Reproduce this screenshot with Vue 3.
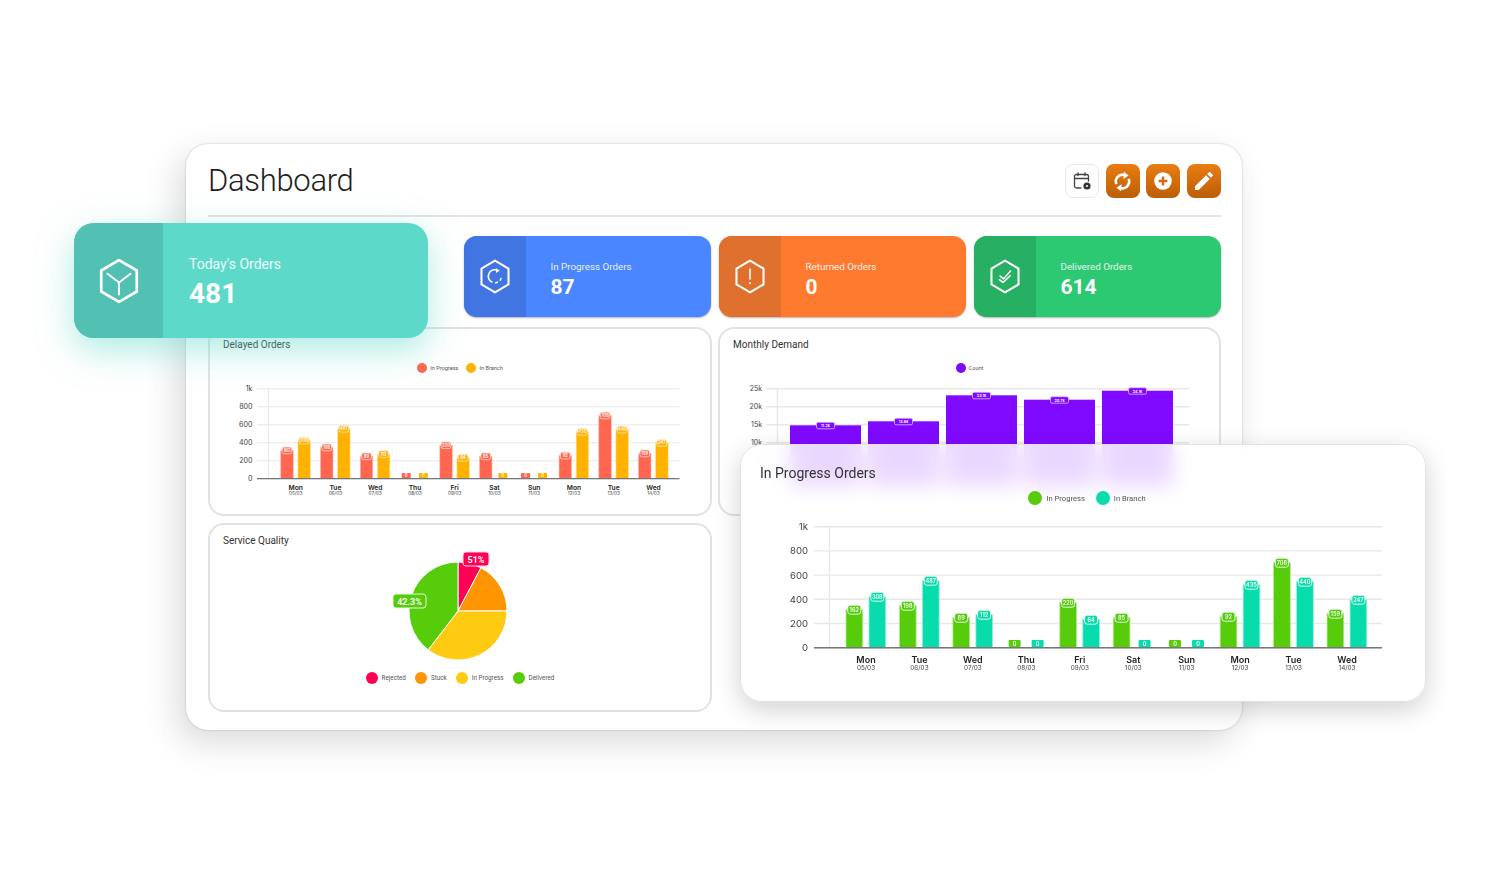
<script setup>
const hex = 'M20 2 L37 12 V32 L20 42 L3 32 V12 Z'

const days = [
  ['Mon', '05/03'], ['Tue', '06/03'], ['Wed', '07/03'], ['Thu', '08/03'], ['Fri', '09/03'],
  ['Sat', '10/03'], ['Sun', '11/03'], ['Mon', '12/03'], ['Tue', '13/03'], ['Wed', '14/03']
]
const pairs = [
  [162, 38, 308, 51], [198, 42, 487, 67], [89, 30, 112, 33], [0, 0, 0, 0], [220, 45, 64, 28],
  [85, 30, 0, 0], [0, 0, 0, 0], [92, 31, 435, 63], [708, 85, 440, 66], [159, 34, 247, 48]
]
const groups = days.map((d, i) => {
  const c = 866 + i * 53.45
  const [va, ha, vb, hb] = pairs[i]
  return {
    c, day: d[0], date: d[1],
    bars: [
      { key: 'a', x: c - 20, tag: c - 11.7, v: va, h: ha },
      { key: 'b', x: c + 3, tag: c + 11.3, v: vb, h: hb }
    ]
  }
})
const gridY = [
  ['1k', 526.7], ['800', 550.9], ['600', 575.1], ['400', 599.3], ['200', 623.5], ['0', 647.7]
]
const demandGrid = [['25k', 388.7], ['20k', 406.7], ['15k', 424.7], ['10k', 442.7], ['5k', 460.7], ['0', 478.7]]
const demand = [
  { x: 790, top: 425.3, v: '11.2k' },
  { x: 868, top: 421.3, v: '13.6k' },
  { x: 946, top: 395.3, v: '23.1k' },
  { x: 1024, top: 399.7, v: '20.7k' },
  { x: 1102, top: 390.7, v: '24.1k' }
]

function arc(a0, a1, r = 49) {
  const p = (a) => {
    const t = (a * Math.PI) / 180
    return `${(70 + r * Math.sin(t)).toFixed(2)} ${(62 - r * Math.cos(t)).toFixed(2)}`
  }
  return `M70 62 L${p(a0)} A${r} ${r} 0 ${a1 - a0 > 180 ? 1 : 0} 1 ${p(a1)} Z`
}
const slices = [
  { d: arc(0, 28), fill: '#ff0055' },
  { d: arc(28, 90), fill: '#ff9500' },
  { d: arc(90, 217.5), fill: '#ffcb12' },
  { d: arc(217.5, 360), fill: '#57cc0b' }
]
const pieLegend = [
  { label: 'Rejected', color: '#ff0055' },
  { label: 'Stuck', color: '#ff9500' },
  { label: 'In Progress', color: '#ffcb12' },
  { label: 'Delivered', color: '#57cc0b' }
]
const stats = [
  { label: 'In Progress Orders', value: '87', cls: 'blue', icon: 'progress' },
  { label: 'Returned Orders', value: '0', cls: 'orange', icon: 'alert' },
  { label: 'Delivered Orders', value: '614', cls: 'green', icon: 'check' }
]
</script>

<template>
  <div class="page">
    <main class="panel">
      <header class="head">
        <h1>Dashboard</h1>
        <div class="actions">
          <button class="btn plain" aria-label="Calendar">
            <svg width="20" height="20" viewBox="0 0 20 20" fill="none" stroke="#444" stroke-width="1.3" stroke-linecap="round">
              <path d="M9 17H4.5A2 2 0 0 1 2.5 15V5.5A2 2 0 0 1 4.5 3.5H14.5A2 2 0 0 1 16.5 5.5V10" />
              <path d="M2.5 7.5H16.5M6 1.8V4.5M13 1.8V4.5" />
              <circle cx="15" cy="15" r="3.6" fill="#333" stroke="none" />
              <circle cx="15" cy="15" r="1" fill="#fff" stroke="none" />
            </svg>
          </button>
          <button class="btn" aria-label="Refresh">
            <svg width="21" height="21" viewBox="0 0 24 24" fill="none" stroke="#fff" stroke-width="3">
              <path d="M5 15A7.8 7.8 0 0 1 14.5 4.6" />
              <path d="M19 9A7.8 7.8 0 0 1 9.5 19.4" />
              <path d="M13.5 0.8L19 5L13 9Z" fill="#fff" stroke="none" />
              <path d="M10.5 23.2L5 19L11 15Z" fill="#fff" stroke="none" />
            </svg>
          </button>
          <button class="btn" aria-label="Add">
            <svg width="20" height="20" viewBox="0 0 20 20">
              <circle cx="10" cy="10" r="8.8" fill="#fff" />
              <path d="M10 5.6V14.4M5.6 10H14.4" stroke="#d06c0a" stroke-width="2.4" />
            </svg>
          </button>
          <button class="btn" aria-label="Edit">
            <svg width="24" height="24" viewBox="0 0 24 24" fill="#fff">
              <path d="M3 17.25V21h3.75L17.81 9.94l-3.75-3.75L3 17.25zM20.71 7.04a1 1 0 0 0 0-1.41l-2.34-2.34a1 1 0 0 0-1.41 0l-1.83 1.83 3.75 3.75 1.83-1.83z" />
            </svg>
          </button>
        </div>
      </header>

      <section class="stats">
        <article v-for="s in stats" :key="s.label" class="stat" :class="s.cls">
          <div class="stat-icon">
            <svg width="32" height="35" viewBox="0 0 40 44" fill="none" stroke="#fff" stroke-width="2.6" stroke-linejoin="round" stroke-linecap="round">
              <path :d="hex" />
              <template v-if="s.icon === 'progress'">
                <path d="M23.5 14.5A8 8 0 0 0 16 29" stroke-width="2" />
                <path d="M21 30A8 8 0 0 0 23 29" stroke-width="2" />
                <path d="M26.5 26.5L27.5 24.5" stroke-width="2" />
                <path d="M21 11.5L26 14.5L21.5 17.5Z" fill="#fff" stroke="none" />
              </template>
              <template v-else-if="s.icon === 'alert'">
                <path d="M20 12.5V25" stroke-width="2" />
                <path d="M20 30V30.6" stroke-width="2.4" />
              </template>
              <template v-else>
                <path d="M14 21.5L18 25L27 15" stroke-width="1.9" />
                <path d="M13 26L17.5 29.5L26.5 21" stroke-width="1.9" />
              </template>
            </svg>
          </div>
          <div class="stat-body">
            <span class="stat-label">{{ s.label }}</span>
            <strong class="stat-value">{{ s.value }}</strong>
          </div>
        </article>
      </section>

      <section class="cards">
        <article class="card">
          <h2>Delayed Orders</h2>
          <div class="legend">
            <span class="item"><i style="background:#ff6650"></i>In Progress</span>
            <span class="item"><i style="background:#ffb300"></i>In Branch</span>
          </div>
          <svg class="mini" viewBox="790 515 610 160" width="454" height="119">
            <g v-for="g in gridY" :key="g[0]">
              <line x1="814" x2="1382" :y1="g[1]" :y2="g[1]" class="grid" />
              <text x="808" :y="g[1] + 3.5" text-anchor="end" class="ylab">{{ g[0] }}</text>
            </g>
            <line x1="829.5" x2="829.5" y1="526.7" y2="647.7" class="grid" />
            <g v-for="g in groups" :key="g.c">
              <template v-for="b in g.bars" :key="b.key">
                <template v-if="b.h">
                  <rect :x="b.x" :y="647.7 - b.h" width="16.7" :height="b.h" :fill="b.key === 'a' ? '#ff6650' : '#ffb300'" :stroke="b.key === 'a' ? '#ffb3a8' : '#ffe09a'" stroke-width="0.8" />
                  <rect :x="b.tag - 6.5" :y="643.2 - b.h" width="13" height="9" rx="2.5" :fill="b.key === 'a' ? '#ff6650' : '#ffb300'" stroke="#ffe8d8" stroke-width="1" />
                  <text :x="b.tag" :y="649.6 - b.h" class="tag">{{ b.v }}</text>
                </template>
                <template v-else>
                  <rect :x="b.tag - 6" y="640" width="12" height="7" rx="1" :fill="b.key === 'a' ? '#ff6650' : '#ffb300'" />
                  <text :x="b.tag" y="645.6" class="tag">0</text>
                </template>
              </template>
              <text :x="g.c" y="662.5" class="day">{{ g.day }}</text>
              <text :x="g.c" y="669.5" class="date">{{ g.date }}</text>
            </g>
            <line x1="814" x2="1382" y1="647.7" y2="647.7" class="base" />
          </svg>
        </article>

        <article class="card">
          <h2>Monthly Demand</h2>
          <div class="legend">
            <span class="item"><i style="background:#7f0aff"></i>Count</span>
          </div>
          <svg class="demand" viewBox="730 380 470 120" width="470" height="120">
            <g v-for="g in demandGrid" :key="g[0]">
              <line x1="766" x2="1189" :y1="g[1]" :y2="g[1]" class="grid" />
              <text x="762" :y="g[1] + 2.5" text-anchor="end" class="ylab small">{{ g[0] }}</text>
            </g>
            <line x1="777.5" x2="777.5" y1="388.7" y2="478.7" class="grid" />
            <g v-for="d in demand" :key="d.x">
              <rect :x="d.x" :y="d.top" width="71" :height="486 - d.top" fill="#7f0aff" />
              <rect :x="d.x + 26.5" :y="d.top - 3" width="18" height="6.5" rx="1.5" fill="#7f0aff" stroke="#d9bcff" stroke-width="0.8" />
              <text :x="d.x + 35.5" :y="d.top + 1.9" class="tag tiny">{{ d.v }}</text>
            </g>
          </svg>
        </article>

        <article class="card">
          <h2>Service Quality</h2>
          <svg class="pie" viewBox="0 0 140 122" width="140" height="122">
            <path v-for="s in slices" :key="s.fill" :d="s.d" :fill="s.fill" stroke="#fff" stroke-width="1" />
            <rect x="75" y="3" width="26" height="14" rx="3" fill="#ff0055" stroke="#ffd6e3" stroke-width="1" />
            <text x="88" y="13.5" class="pct">51%</text>
            <rect x="5" y="45" width="33" height="14" rx="3" fill="#57cc0b" stroke="#e3f7d4" stroke-width="1" />
            <text x="21.5" y="55.5" class="pct">42.3%</text>
          </svg>
          <div class="legend pie-legend">
            <span v-for="l in pieLegend" :key="l.label" class="item"><i :style="{ background: l.color }"></i>{{ l.label }}</span>
          </div>
        </article>
      </section>

      <article class="float-today">
        <div class="today-icon">
          <svg width="42" height="46" viewBox="0 0 40 44" fill="none" stroke="#fff" stroke-width="2.6" stroke-linejoin="round" stroke-linecap="round">
            <path :d="hex" />
            <path d="M9 15L20 23.5L31 15M20 23.5V35" stroke-width="1.9" />
          </svg>
        </div>
        <div class="today-body">
          <span class="today-label">Today's Orders</span>
          <strong class="today-value">481</strong>
        </div>
      </article>

      <article class="float-chart">
        <h2>In Progress Orders</h2>
        <div class="legend big">
          <span class="item"><i style="background:#57cc0b"></i>In Progress</span>
          <span class="item"><i style="background:#08dcac"></i>In Branch</span>
        </div>
        <svg class="large" viewBox="790 515 610 160" width="610" height="160">
          <g v-for="g in gridY" :key="g[0]">
            <line x1="814" x2="1382" :y1="g[1]" :y2="g[1]" class="grid" />
            <text x="808" :y="g[1] + 3.5" text-anchor="end" class="ylab">{{ g[0] }}</text>
          </g>
          <line x1="829.5" x2="829.5" y1="526.7" y2="647.7" class="grid" />
          <g v-for="g in groups" :key="g.c">
            <template v-for="b in g.bars" :key="b.key">
              <template v-if="b.h">
                <rect :x="b.x" :y="647.7 - b.h" width="16.7" :height="b.h" :fill="b.key === 'a' ? '#57cc0b' : '#08dcac'" :stroke="b.key === 'a' ? '#b4eb8e' : '#95f0da'" stroke-width="0.8" />
                <rect :x="b.tag - 6.5" :y="643.2 - b.h" width="13" height="9" rx="2.5" :fill="b.key === 'a' ? '#57cc0b' : '#08dcac'" stroke="#e2f9e8" stroke-width="1" />
                <text :x="b.tag" :y="649.6 - b.h" class="tag">{{ b.v }}</text>
              </template>
              <template v-else>
                <rect :x="b.tag - 6" y="640" width="12" height="7" rx="1" :fill="b.key === 'a' ? '#57cc0b' : '#08dcac'" />
                <text :x="b.tag" y="645.6" class="tag">0</text>
              </template>
            </template>
            <text :x="g.c" y="662.5" class="day">{{ g.day }}</text>
            <text :x="g.c" y="669.5" class="date">{{ g.date }}</text>
          </g>
          <line x1="814" x2="1382" y1="647.7" y2="647.7" class="base" />
        </svg>
      </article>
    </main>
  </div>
</template>

<style>
html, body { background: #fff; overflow: hidden; }
</style>

<style scoped>
.page {
  width: 1500px;
  height: 874px;
  box-sizing: border-box;
  padding: 144px 0 0 186px;
  background: #fff;
  overflow: hidden;
  font-family: Roboto, "Noto Sans", sans-serif;
}
.panel {
  position: relative;
  width: 1056px;
  height: 586px;
  box-sizing: border-box;
  padding: 0 21px 0 22px;
  background: #fff;
  border-radius: 22px;
  box-shadow: 0 0 2px rgba(0, 0, 0, .25), -8px 12px 34px rgba(0, 0, 0, .15);
}
.head {
  height: 73px;
  box-sizing: border-box;
  display: flex;
  align-items: flex-start;
  justify-content: space-between;
  border-bottom: 2px solid #e4e4e4;
}
h1 {
  margin: 16.5px 0 0;
  font: 300 31px/40px Roboto, sans-serif;
  letter-spacing: -.3px;
  color: #1e1e1e;
}
.actions { display: flex; gap: 6.67px; margin-top: 20px; }
.btn {
  width: 34px;
  height: 34px;
  padding: 0;
  display: flex;
  align-items: center;
  justify-content: center;
  border: 0;
  border-radius: 8px;
  background: linear-gradient(#e97d13, #bb5e05);
}
.btn.plain {
  background: #fff;
  border: 1.5px solid #e9e9e9;
  box-sizing: border-box;
}
.stats {
  display: flex;
  justify-content: flex-end;
  gap: 8px;
  margin-top: 19px;
}
.stat {
  width: 247px;
  height: 81px;
  display: flex;
  border-radius: 13px;
  overflow: hidden;
  color: #fff;
  box-shadow: 0 1px 2px rgba(0, 0, 0, .3);
}
.stat-icon {
  width: 62px;
  display: flex;
  align-items: center;
  justify-content: center;
}
.stat-body {
  padding: 23px 0 0 24.5px;
  display: flex;
  flex-direction: column;
}
.stat-label { font-size: 9.8px; line-height: 15px; opacity: .88; }
.stat-value { font-size: 21px; line-height: 26px; font-weight: 700; }
.blue { background: #4a86ff; }
.blue .stat-icon { background: #4175e2; }
.orange { background: #fd7a2f; }
.orange .stat-icon { background: #e0702d; }
.green { background: #2cc872; }
.green .stat-icon { background: #27b063; }

.cards {
  display: grid;
  grid-template-columns: 504px 503px;
  grid-template-rows: 189px 189px;
  gap: 7px 6px;
  margin-top: 10px;
}
.card {
  box-sizing: border-box;
  padding: 8px 0 0 13px;
  border: 2px solid #e2e2e2;
  border-radius: 16px;
  background: #fff;
}
h2 {
  margin: 0;
  font: 400 10px/16px Roboto, sans-serif;
  color: #333;
}
.legend {
  display: flex;
  justify-content: center;
  gap: 8px;
  height: 12px;
  margin: 9px 13px 0 0;
}
.item {
  display: flex;
  align-items: center;
  gap: 3px;
  font-size: 5.6px;
  color: #555;
}
.item i {
  width: 10px;
  height: 10px;
  border-radius: 50%;
}
.mini { display: block; margin: 6px 0 0 16px; }
.demand { display: block; margin: 6px 0 0 -3px; }
.pie { display: block; margin: 0 0 0 165px; }
.pie-legend { gap: 9px; margin-top: 1px; }
.pie-legend .item { gap: 4px; font-size: 6.3px; }
.pie-legend .item i { width: 12px; height: 12px; }

.grid { stroke: #e8e8e8; stroke-width: 1.4; }
.base { stroke: #777; stroke-width: 1.6; }
.ylab { font: 400 9.6px Inter, sans-serif; fill: #444; }
.ylab.small { font-size: 7px; }
.tag { font: 600 5.6px Inter, sans-serif; fill: #fff; text-anchor: middle; }
.tag.tiny { font-size: 3.8px; }
.day { font: 600 9px Inter, sans-serif; fill: #222; text-anchor: middle; }
.date { font: 400 6.4px Inter, sans-serif; fill: #444; text-anchor: middle; }
.pct { font: 600 9px Roboto, sans-serif; fill: #fff; text-anchor: middle; }

.float-today {
  position: absolute;
  left: -112px;
  top: 79px;
  width: 354px;
  height: 115px;
  display: flex;
  border-radius: 20px;
  overflow: hidden;
  color: #fff;
  background: #5dd9c9;
  box-shadow: 0 12px 34px rgba(93, 217, 201, .5);
}
.today-icon {
  width: 89px;
  display: flex;
  align-items: center;
  justify-content: center;
  background: #52c0b3;
}
.today-body {
  padding: 31px 0 0 26px;
  display: flex;
  flex-direction: column;
}
.today-label { font-size: 14px; line-height: 21px; opacity: .9; }
.today-value { font-size: 28px; line-height: 38px; font-weight: 700; }

.float-chart {
  position: absolute;
  left: 554px;
  top: 300px;
  width: 686px;
  height: 258px;
  box-sizing: border-box;
  padding: 17px 0 0 19px;
  border: 1px solid #e2e2e2;
  border-radius: 22px;
  background: rgba(255, 255, 255, .84);
  backdrop-filter: blur(10px);
  box-shadow: 0 8px 26px rgba(0, 0, 0, .18);
}
.float-chart h2 { font-size: 14px; line-height: 22px; color: #333; }
.legend.big { height: 14px; margin: 7px 0 0 -11px; gap: 11px; }
.legend.big .item { font-size: 7.6px; gap: 4px; }
.legend.big .item i { width: 14px; height: 14px; }
.large { display: block; margin: 10px 0 0 30px; }
</style>
